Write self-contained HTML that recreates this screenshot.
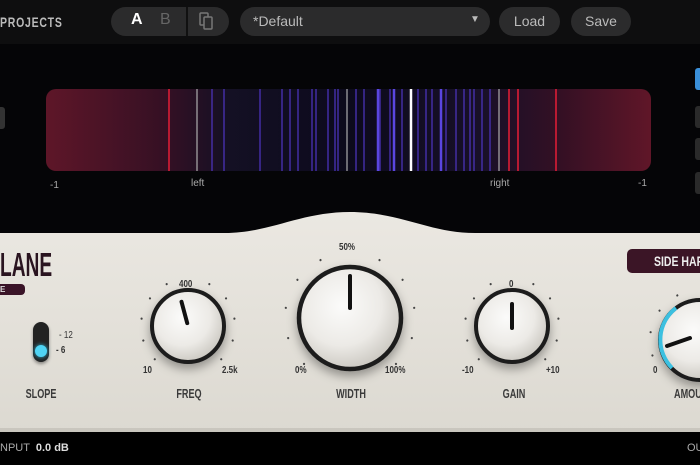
<!DOCTYPE html>
<html><head><meta charset="utf-8"><style>
*{margin:0;padding:0;box-sizing:border-box}
body{width:700px;height:465px;background:#000;position:relative;overflow:hidden;font-family:"Liberation Sans",sans-serif}
.abs{position:absolute;white-space:nowrap}
.hdr{left:0;top:0;width:700px;height:44px;background:#0e0e0f}
.pill{background:#2b2b2c;border-radius:15px;color:#bbb;font-size:14px}
.cond{font-family:"Liberation Sans",sans-serif;font-weight:bold;transform:scaleX(.75);transform-origin:left}
.sm{font-family:"Liberation Sans",sans-serif;color:#333;font-size:10px;font-weight:bold;transform:scaleX(.8);transform-origin:left}
.lb{font-family:"Liberation Sans",sans-serif;color:#3a3a3a;font-size:13px;font-weight:bold;transform:scaleX(.7);transform-origin:center;width:80px;text-align:center}
</style></head><body>
<div class="abs hdr"></div>
<div class="abs cond" style="left:0;top:14px;color:#bbb;font-size:14px;letter-spacing:1px">PROJECTS</div>
<div class="abs pill" style="left:111px;top:7px;width:118px;height:29px"></div>
<div class="abs" style="left:186px;top:7px;width:2px;height:29px;background:#111"></div>
<div class="abs" style="left:131px;top:11px;color:#fff;font-size:16px;font-weight:bold">A</div>
<div class="abs" style="left:160px;top:11px;color:#666;font-size:16px">B</div>
<svg class="abs" style="left:198px;top:11px" width="18" height="20"><rect x="2" y="2" width="8" height="12" fill="none" stroke="#777" stroke-width="1.5" rx="1"/><rect x="6" y="6" width="8" height="12" fill="#2b2b2c" stroke="#777" stroke-width="1.5" rx="1"/></svg>
<div class="abs pill" style="left:240px;top:7px;width:250px;height:29px"></div>
<div class="abs" style="left:253px;top:13px;color:#bbb;font-size:14px">*Default</div>
<div class="abs" style="left:470px;top:14px;color:#bbb;font-size:10px">▼</div>
<div class="abs pill" style="left:499px;top:7px;width:61px;height:29px;text-align:center;line-height:29px">Load</div>
<div class="abs pill" style="left:571px;top:7px;width:60px;height:29px;text-align:center;line-height:29px">Save</div>

<div class="abs" style="left:0;top:44px;width:700px;height:190px;background:#050507"></div>
<div class="abs" style="left:0;top:107px;width:5px;height:22px;background:#333;border-radius:0 3px 3px 0"></div>
<div class="abs" style="left:695px;top:68px;width:8px;height:22px;background:#3a8fd8;border-radius:3px"></div>
<div class="abs" style="left:695px;top:106px;width:8px;height:22px;background:#2a2a2a;border-radius:3px"></div>
<div class="abs" style="left:695px;top:138px;width:8px;height:22px;background:#2a2a2a;border-radius:3px"></div>
<div class="abs" style="left:695px;top:172px;width:8px;height:22px;background:#2a2a2a;border-radius:3px"></div>

<svg class="abs" style="left:46px;top:89px" width="605" height="82">
<defs><linearGradient id="mg" x1="0" x2="1"><stop offset="0" stop-color="#5e1628"/><stop offset=".2" stop-color="#341024"/><stop offset=".3" stop-color="#141024"/><stop offset=".5" stop-color="#0c0a1c"/><stop offset=".72" stop-color="#181028"/><stop offset=".85" stop-color="#341024"/><stop offset="1" stop-color="#601628"/></linearGradient>
<clipPath id="cp"><rect width="605" height="82" rx="10"/></clipPath></defs>
<g clip-path="url(#cp)">
<rect width="605" height="82" fill="url(#mg)"/>
<g stroke="#4a32b8" stroke-width="1.3">
<line x1="166" y1="0" x2="166" y2="82"/><line x1="178" y1="0" x2="178" y2="82"/><line x1="214" y1="0" x2="214" y2="82"/><line x1="236" y1="0" x2="236" y2="82"/><line x1="244" y1="0" x2="244" y2="82"/><line x1="252" y1="0" x2="252" y2="82"/><line x1="266" y1="0" x2="266" y2="82"/><line x1="270" y1="0" x2="270" y2="82"/><line x1="282" y1="0" x2="282" y2="82"/><line x1="289" y1="0" x2="289" y2="82"/><line x1="292" y1="0" x2="292" y2="82"/><line x1="310" y1="0" x2="310" y2="82"/><line x1="318" y1="0" x2="318" y2="82"/><line x1="334" y1="0" x2="334" y2="82"/><line x1="344" y1="0" x2="344" y2="82"/><line x1="356" y1="0" x2="356" y2="82"/><line x1="372" y1="0" x2="372" y2="82"/><line x1="380" y1="0" x2="380" y2="82"/><line x1="386" y1="0" x2="386" y2="82"/><line x1="400" y1="0" x2="400" y2="82"/><line x1="410" y1="0" x2="410" y2="82"/><line x1="418" y1="0" x2="418" y2="82"/><line x1="424" y1="0" x2="424" y2="82"/><line x1="428" y1="0" x2="428" y2="82"/><line x1="436" y1="0" x2="436" y2="82"/><line x1="444" y1="0" x2="444" y2="82"/>
</g>
<g stroke="#5a46e0" stroke-width="2.5"><line x1="348" y1="0" x2="348" y2="82"/><line x1="395" y1="0" x2="395" y2="82"/><line x1="332" y1="0" x2="332" y2="82"/></g>
<g stroke="#c81c34" stroke-width="1.8"><line x1="123" y1="0" x2="123" y2="82"/><line x1="463" y1="0" x2="463" y2="82"/><line x1="472" y1="0" x2="472" y2="82"/><line x1="510" y1="0" x2="510" y2="82"/></g>
<g stroke="#bbb" stroke-width="1.1"><line x1="151" y1="0" x2="151" y2="82"/><line x1="301" y1="0" x2="301" y2="82"/><line x1="453" y1="0" x2="453" y2="82"/></g>
<line x1="365" y1="0" x2="365" y2="82" stroke="#fff" stroke-width="2.5"/>
</g></svg>
<div class="abs" style="left:50px;top:180px;color:#aaa;font-size:10px">-1</div>
<div class="abs" style="left:191px;top:178px;color:#aaa;font-size:10px">left</div>
<div class="abs" style="left:490px;top:178px;color:#aaa;font-size:10px">right</div>
<div class="abs" style="left:638px;top:178px;color:#aaa;font-size:10px">-1</div>

<svg class="abs" style="left:0;top:0" width="700" height="465">
<defs>
<linearGradient id="pg" x1="0" y1="0" x2="0" y2="1"><stop offset="0" stop-color="#ebe8e2"/><stop offset="1" stop-color="#dcd9d1"/></linearGradient>
<radialGradient id="kg" cx=".42" cy=".38" r=".65"><stop offset="0" stop-color="#fbfbfa"/><stop offset=".6" stop-color="#eceae6"/><stop offset="1" stop-color="#c9c6bf"/></radialGradient>
<filter id="sh" x="-30%" y="-30%" width="160%" height="160%"><feDropShadow dx="0" dy="5" stdDeviation="5" flood-opacity=".35"/></filter>
</defs>
<path d="M0,233 L225,233 C270,233 300,212 350,212 C400,212 430,233 475,233 L700,233 L700,432 L0,432 Z" fill="url(#pg)"/>
<rect x="0" y="428" width="700" height="4" fill="#c9c6be"/>
<g fill="#444">
<circle cx="188" cy="279" r="1.1" transform="rotate(-135 188 326)"/><circle cx="188" cy="279" r="1.1" transform="rotate(-108 188 326)"/><circle cx="188" cy="279" r="1.1" transform="rotate(-81 188 326)"/><circle cx="188" cy="279" r="1.1" transform="rotate(-54 188 326)"/><circle cx="188" cy="279" r="1.1" transform="rotate(-27 188 326)"/><circle cx="188" cy="279" r="1.1" transform="rotate(27 188 326)"/><circle cx="188" cy="279" r="1.1" transform="rotate(54 188 326)"/><circle cx="188" cy="279" r="1.1" transform="rotate(81 188 326)"/><circle cx="188" cy="279" r="1.1" transform="rotate(108 188 326)"/><circle cx="188" cy="279" r="1.1" transform="rotate(135 188 326)"/>
<circle cx="350" cy="253" r="1.1" transform="rotate(-135 350 318)"/><circle cx="350" cy="253" r="1.1" transform="rotate(-108 350 318)"/><circle cx="350" cy="253" r="1.1" transform="rotate(-81 350 318)"/><circle cx="350" cy="253" r="1.1" transform="rotate(-54 350 318)"/><circle cx="350" cy="253" r="1.1" transform="rotate(-27 350 318)"/><circle cx="350" cy="253" r="1.1" transform="rotate(27 350 318)"/><circle cx="350" cy="253" r="1.1" transform="rotate(54 350 318)"/><circle cx="350" cy="253" r="1.1" transform="rotate(81 350 318)"/><circle cx="350" cy="253" r="1.1" transform="rotate(108 350 318)"/><circle cx="350" cy="253" r="1.1" transform="rotate(135 350 318)"/>
<circle cx="512" cy="279" r="1.1" transform="rotate(-135 512 326)"/><circle cx="512" cy="279" r="1.1" transform="rotate(-108 512 326)"/><circle cx="512" cy="279" r="1.1" transform="rotate(-81 512 326)"/><circle cx="512" cy="279" r="1.1" transform="rotate(-54 512 326)"/><circle cx="512" cy="279" r="1.1" transform="rotate(-27 512 326)"/><circle cx="512" cy="279" r="1.1" transform="rotate(27 512 326)"/><circle cx="512" cy="279" r="1.1" transform="rotate(54 512 326)"/><circle cx="512" cy="279" r="1.1" transform="rotate(81 512 326)"/><circle cx="512" cy="279" r="1.1" transform="rotate(108 512 326)"/><circle cx="512" cy="279" r="1.1" transform="rotate(135 512 326)"/>
<circle cx="700" cy="290" r="1.1" transform="rotate(-108 700 340)"/><circle cx="700" cy="290" r="1.1" transform="rotate(-81 700 340)"/><circle cx="700" cy="290" r="1.1" transform="rotate(-54 700 340)"/><circle cx="700" cy="290" r="1.1" transform="rotate(-27 700 340)"/>
</g>
<g filter="url(#sh)">
<circle cx="188" cy="326" r="36" fill="url(#kg)" stroke="#1a1a1a" stroke-width="4"/>
<circle cx="350" cy="318" r="51" fill="url(#kg)" stroke="#1a1a1a" stroke-width="4.5"/>
<circle cx="512" cy="326" r="36" fill="url(#kg)" stroke="#1a1a1a" stroke-width="4"/>
<circle cx="700" cy="340" r="40" fill="url(#kg)" stroke="#1a1a1a" stroke-width="4"/>
</g>
<path d="M672,368 A40,40 0 0 1 676,308" fill="none" stroke="#3cc0e0" stroke-width="4"/>
<g stroke="#111" stroke-width="4" stroke-linecap="round">
<line x1="188" y1="323" x2="188" y2="301" transform="rotate(-15 188 326)"/>
<line x1="350" y1="308" x2="350" y2="276"/>
<line x1="512" y1="328" x2="512" y2="304"/>
<line x1="667" y1="346" x2="690" y2="338"/>
</g>
</svg>

<div class="abs" style="left:33px;top:322px;width:16px;height:40px;background:#222;border-radius:8px;box-shadow:0 2px 3px rgba(0,0,0,.4)"></div>
<div class="abs" style="left:35px;top:345px;width:12px;height:12px;background:#4fd4f4;border-radius:50%;box-shadow:0 0 4px #3bd"></div>

<div class="abs cond" style="left:0;top:246px;font-size:33px;color:#2a1420;transform:scaleX(.58)">LANE</div>
<div class="abs" style="left:0;top:284px;width:25px;height:11px;background:#3a1428;border-radius:0 4px 4px 0;color:#ddd;font-size:8px;font-weight:bold;line-height:11px">E</div>
<div class="abs" style="left:627px;top:249px;width:80px;height:24px;background:#3b1526;border-radius:5px"></div>
<div class="abs cond" style="left:654px;top:249px;color:#eee;font-size:14px;line-height:24px">SIDE HAR</div>

<div class="abs sm" style="left:59px;top:330px;font-weight:normal">- 12</div>
<div class="abs sm" style="left:56px;top:345px">- 6</div>

<div class="abs sm" style="left:179px;top:279px">400</div>
<div class="abs sm" style="left:143px;top:365px">10</div>
<div class="abs sm" style="left:222px;top:365px">2.5k</div>
<div class="abs sm" style="left:339px;top:242px">50%</div>
<div class="abs sm" style="left:295px;top:365px">0%</div>
<div class="abs sm" style="left:385px;top:365px">100%</div>
<div class="abs sm" style="left:509px;top:279px">0</div>
<div class="abs sm" style="left:462px;top:365px">-10</div>
<div class="abs sm" style="left:546px;top:365px">+10</div>
<div class="abs sm" style="left:653px;top:365px">0</div>

<div class="abs lb" style="left:1px;top:386px">SLOPE</div>
<div class="abs lb" style="left:149px;top:386px">FREQ</div>
<div class="abs lb" style="left:311px;top:386px">WIDTH</div>
<div class="abs lb" style="left:474px;top:386px">GAIN</div>
<div class="abs lb" style="left:674px;top:386px;text-align:left;transform-origin:left">AMOUNT</div>

<div class="abs" style="left:0;top:442px;color:#aaa;font-size:11px">NPUT <b style="color:#ddd">&nbsp;0.0 dB</b></div>
<div class="abs" style="left:687px;top:442px;color:#aaa;font-size:11px">OUT</div>
</body></html>
